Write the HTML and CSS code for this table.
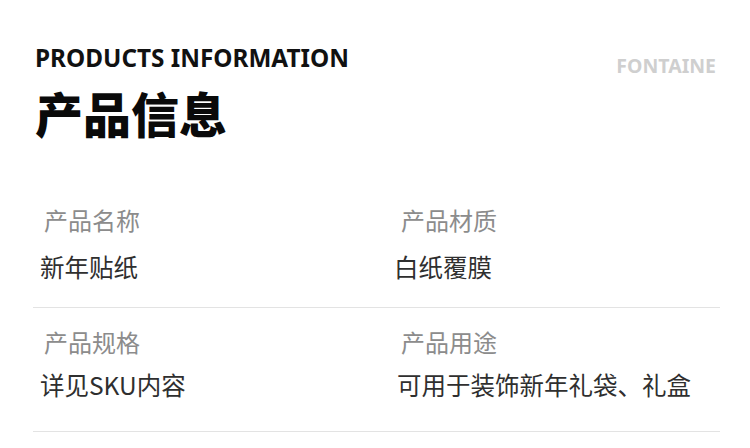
FILE: index.html
```html
<!DOCTYPE html>
<html lang="zh-CN">
<head>
<meta charset="utf-8">
<title>产品信息</title>
<link rel="stylesheet" href="styles.css">
</head>
<body>
<main class="page">
  <header class="header">
    <div class="titles">
      <div class="title-en">PRODUCTS INFORMATION</div>
      <h1 class="title-cn">产品信息</h1>
    </div>
    <div class="brand">FONTAINE</div>
  </header>
  <section class="info">
    <div class="row">
      <div class="cell cell-left">
        <div class="label">产品名称</div>
        <div class="value">新年贴纸</div>
      </div>
      <div class="cell cell-right">
        <div class="label">产品材质</div>
        <div class="value value-tight">白纸覆膜</div>
      </div>
    </div>
    <div class="row">
      <div class="cell cell-left">
        <div class="label">产品规格</div>
        <div class="value">详见SKU内容</div>
      </div>
      <div class="cell cell-right">
        <div class="label">产品用途</div>
        <div class="value">可用于装饰新年礼袋、礼盒</div>
      </div>
    </div>
  </section>
</main>
</body>
</html>
```
FILE: styles.css
```css
html, body {
  margin: 0;
  padding: 0;
  background: #ffffff;
}

body {
  font-family: "Noto Sans CJK SC", "Noto Sans", sans-serif;
  color: #333333;
}

.page {
  width: 750px;
  height: 448px;
  box-sizing: border-box;
  padding: 42px 30px 0 33px;
  overflow: hidden;
}

.header {
  display: flex;
  justify-content: space-between;
  align-items: flex-start;
  height: 142px;
}

.titles {
  display: flex;
  flex-direction: column;
  padding-left: 2px;
}

.title-en {
  font-family: "Noto Sans", sans-serif;
  font-weight: 700;
  font-size: 24.3px;
  line-height: 32px;
  color: #111111;
}

.title-cn {
  margin: 10px 0 0 0;
  font-family: "Noto Sans CJK SC", sans-serif;
  font-weight: 900;
  font-size: 48px;
  line-height: 56px;
  color: #0a0a0a;
}

.brand {
  font-family: "Noto Sans", sans-serif;
  font-weight: 700;
  font-size: 19.5px;
  line-height: 24px;
  color: #cfcfcf;
  margin-top: 12px;
  margin-right: 4px;
}

.info {
  display: flex;
  flex-direction: column;
}

.row {
  display: grid;
  grid-template-columns: 361px 1fr;
  padding: 20px 0 24px 0;
  border-bottom: 1px solid #e3e3e3;
}

.row + .row {
  padding-top: 18px;
  padding-bottom: 30px;
}

.cell {
  display: flex;
  flex-direction: column;
  gap: 15px;
}

.row + .row .cell {
  gap: 11px;
}

.label {
  font-size: 24px;
  line-height: 32px;
  color: #8c8c8c;
  font-weight: 400;
}

.value {
  font-size: 24.5px;
  line-height: 32px;
  color: #2f2f2f;
  font-weight: 400;
}

.cell-left .label { padding-left: 11px; }
.cell-left .value { padding-left: 7px; }
.cell-right .label { padding-left: 7px; }
.cell-right .value { padding-left: 3px; }
.cell-right .value-tight { padding-left: 0; }
```
